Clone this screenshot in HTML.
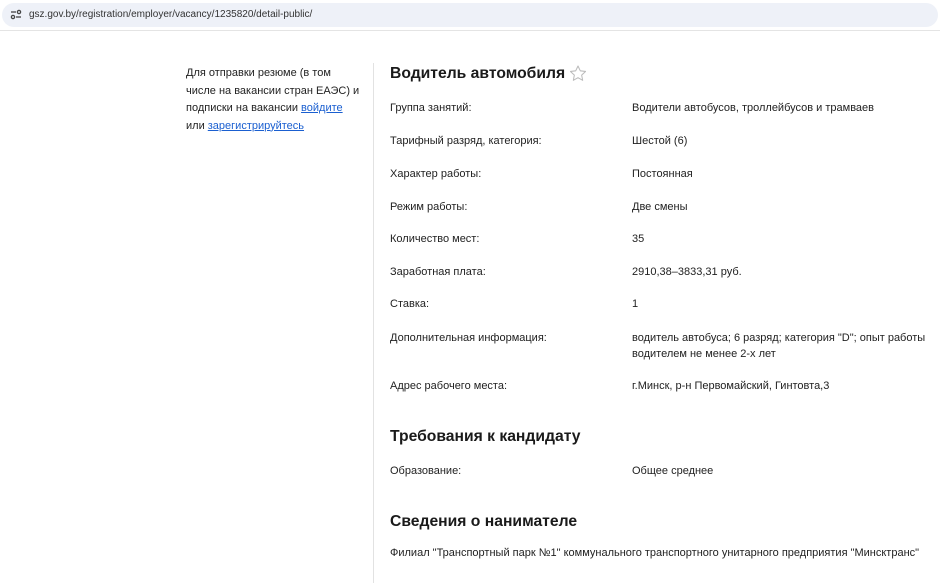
<!DOCTYPE html>
<html><head><meta charset="utf-8"><style>
body{margin:0;width:940px;height:572px;overflow:hidden;background:#fff;font-family:"Liberation Sans",Arial,sans-serif;color:#222;position:relative}
.bar{position:absolute;left:2px;top:3px;width:936px;height:24px;background:#eef1f8;border-radius:12px}
.url{position:absolute;left:29px;top:9px;font-size:10px;color:#333}
.line{position:absolute;left:0;top:30px;width:940px;height:1px;background:#e4e4e4}
.side{position:absolute;left:186px;top:65px;width:175px;font-size:11px;line-height:17.5px;color:#222}
.side a{color:#1a5fd0;text-decoration:underline}
.vd{position:absolute;left:373px;top:63px;width:1px;height:520px;background:#e2e2e2}
.h{position:absolute;left:390px;font-size:15.7px;font-weight:bold;color:#1a1a1a}
.l,.v{position:absolute;font-size:11px;line-height:16px;color:#222}
.l{left:390px}.v{left:632px;width:300px}
</style></head><body>
<div class="bar"></div>
<svg style="position:absolute;left:10px;top:9px" width="12" height="11" viewBox="0 0 12 11"><g stroke="#444" stroke-width="1.3" fill="none"><line x1="1" y1="3" x2="6" y2="3"/><circle cx="9" cy="3" r="1.6"/><circle cx="3" cy="8" r="1.6"/><line x1="6" y1="8" x2="11" y2="8"/></g></svg>
<div class="url">gsz.gov.by/registration/employer/vacancy/1235820/detail-public/</div>
<div class="line"></div>
<div class="side">Для отправки резюме (в том числе на вакансии стран ЕАЭС) и подписки на вакансии <a>войдите</a> или <a>зарегистрируйтесь</a></div>
<div class="vd"></div>
<div class="h" style="top:65px">Водитель автомобиля</div>
<svg style="position:absolute;left:568px;top:64px" width="20" height="19" viewBox="0 0 24 24"><path d="M12 2.5l2.9 6.1 6.6.8-4.9 4.6 1.3 6.6L12 17.3l-5.9 3.3 1.3-6.6-4.9-4.6 6.6-.8z" fill="none" stroke="#bbb" stroke-width="1.3" stroke-linejoin="round"/></svg>
<div class="l" style="top:100px">Группа занятий:</div><div class="v" style="top:100px">Водители автобусов, троллейбусов и трамваев</div>
<div class="l" style="top:133px">Тарифный разряд, категория:</div><div class="v" style="top:133px">Шестой (6)</div>
<div class="l" style="top:166px">Характер работы:</div><div class="v" style="top:166px">Постоянная</div>
<div class="l" style="top:199px">Режим работы:</div><div class="v" style="top:199px">Две смены</div>
<div class="l" style="top:231px">Количество мест:</div><div class="v" style="top:231px">35</div>
<div class="l" style="top:264px">Заработная плата:</div><div class="v" style="top:264px">2910,38–3833,31 руб.</div>
<div class="l" style="top:296px">Ставка:</div><div class="v" style="top:296px">1</div>
<div class="l" style="top:330px">Дополнительная информация:</div><div class="v" style="top:330px">водитель автобуса; 6 разряд; категория "D"; опыт работы водителем не менее 2-х лет</div>
<div class="l" style="top:378px">Адрес рабочего места:</div><div class="v" style="top:378px">г.Минск, р-н Первомайский, Гинтовта,3</div>
<div class="h" style="top:428px">Требования к кандидату</div>
<div class="l" style="top:463px">Образование:</div><div class="v" style="top:463px">Общее среднее</div>
<div class="h" style="top:513px">Сведения о нанимателе</div>
<div class="l" style="top:545px;white-space:nowrap">Филиал "Транспортный парк №1" коммунального транспортного унитарного предприятия "Минсктранс"</div>
</body></html>
